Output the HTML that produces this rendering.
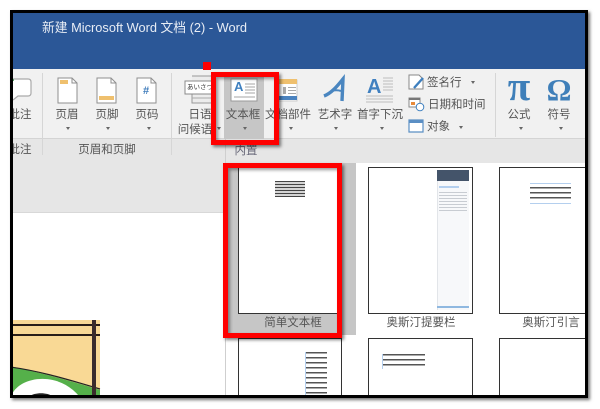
<!DOCTYPE html>
<html><head><meta charset="utf-8"><style>
html,body{margin:0;padding:0;background:#fff}
#p{position:relative;width:600px;height:409px;overflow:hidden;background:#fff;font-family:"Liberation Sans","Noto Sans CJK SC",sans-serif}
#f{position:absolute;left:10px;top:10px;width:578px;height:388px;box-sizing:border-box;border:3px solid #000;box-shadow:2px 2px 3px rgba(0,0,0,.55);overflow:hidden;background:#fff}
#s{position:absolute;left:-13px;top:-13px;width:600px;height:409px;filter:blur(.35px)}
.a{position:absolute}
.t{position:absolute;font-size:11.5px;line-height:14px;color:#555;white-space:nowrap;transform:translateX(-50%)}
.c{position:absolute;width:0;height:0;border-left:2.5px solid transparent;border-right:2.5px solid transparent;border-top:3px solid #666;transform:translateX(-50%)}
.v{position:absolute;width:1px;background:#d6d6d6}
.th{position:absolute;box-sizing:border-box;border:1px solid #333;background:#fff}
.r{position:absolute;box-sizing:border-box;border:5px solid #f00;box-shadow:2px 2px 3px rgba(0,0,0,.5),inset 2px 2px 3px rgba(0,0,0,.4)}
</style></head><body><div id="p"><div id="f"><div id="s">
<div class="a" style="left:0;top:0;width:600px;height:69px;background:#2b5797"></div>
<div class="a" style="left:42px;top:20px;color:#e8edf5;font-size:12.8px;line-height:16px;white-space:nowrap">新建 Microsoft Word 文档 (2) - Word</div>
<div class="a" style="left:0;top:69px;width:600px;height:70px;background:#f1f1f1"></div>
<div class="a" style="left:0;top:138px;width:600px;height:1px;background:#d4d4d4"></div>
<div class="a" style="left:0;top:139px;width:600px;height:73px;background:#e6e6e6"></div>
<div class="a" style="left:0;top:212px;width:225px;height:1px;background:#d8d8d8"></div>
<div class="v" style="left:42px;top:73px;height:82px"></div>
<div class="v" style="left:171px;top:73px;height:82px"></div>
<div class="v" style="left:495px;top:73px;height:64px"></div>

<svg class="a" style="left:0;top:69px" width="600" height="70" viewBox="0 69 600 70" fill="none">
<path d="M13 79H28Q31 79 31 82V93Q31 96 28 96H18L13 100" fill="#fff" stroke="#aaa" stroke-width="1.2"/>
<path d="M13 79H14V81H13Z" fill="#5ba86a"/>
<path d="M58 78H72L77 83V103H58Z" fill="#fff" stroke="#8f8f8f"/><path d="M72 78V83H77" stroke="#8f8f8f"/><path d="M60 80H68V84H60Z" fill="#efc06e"/>
<path d="M97 78H111L116 83V103H97Z" fill="#fff" stroke="#8f8f8f"/><path d="M111 78V83H116" stroke="#8f8f8f"/><path d="M99 96H114V100H99Z" fill="#efc06e"/>
<path d="M137 78H151L156 83V103H137Z" fill="#fff" stroke="#8f8f8f"/><path d="M151 78V83H156" stroke="#8f8f8f"/>
<path d="M192 76H212V103H192V92" fill="#ececec" stroke="#999"/>
<path d="M185 81H212V94H185Z" fill="#fff" stroke="#8a8a8a"/>
<path d="M192 98H212" stroke="#aaa"/>
<path d="M224 72H264V139H224Z" fill="#c6c6c6"/>
<path d="M231 79H257V101H231Z" fill="#fff" stroke="#999"/>
<path d="M245 84H255M245 87H255M245 90H255M245 93H255M234 97H255" stroke="#a5a5a5"/>
<path d="M279 80H297V101H279Z" fill="#fff" stroke="#ccc"/>
<path d="M279 79H297V84H279Z" fill="#efc06e"/><path d="M279 96H297V100H279Z" fill="#4b83bf"/>
<path d="M283 87H286V94H283ZM288 87H296V88H288ZM288 90H296V91H288ZM288 93H296V94H288Z" fill="#aaa"/>
<path d="M324 96C332 93 338 85 343 79L342 101" stroke="#4a86c0" stroke-width="3.4"/>
<path d="M331 91C335 90 338 90 341 91" stroke="#4a86c0" stroke-width="2"/>
<path d="M383 78H393M383 81H393M383 84H393M383 87H393M383 90H393M366 96H393M366 99H393M366 102H393" stroke="#bdbdbd"/>
<path d="M409 75H419L423 79V89H409Z" fill="#fff" stroke="#888"/>
<path d="M414 88L423 78" stroke="#3f80bf" stroke-width="2.4"/>
<path d="M409 98H420V107H409Z" fill="#fff" stroke="#888"/><path d="M409 98H420V100H409Z" fill="#777"/>
<path d="M411 102H415V105H411Z" fill="#e88a3a"/>
<circle cx="420" cy="107" r="3.8" fill="#fff" stroke="#3f80bf"/>
<path d="M409 120H423V132H409Z" fill="#fff" stroke="#5b8fc4" stroke-width="1.2"/><path d="M409 120H423V123H409Z" fill="#5b8fc4"/>
</svg>

<div class="a" style="left:203px;top:62px;width:8px;height:8px;background:#f00;z-index:6"></div>

<div class="a" style="left:187px;top:83px;font-size:6.5px;line-height:10px;color:#333;white-space:nowrap">あいさつ</div>
<div class="a" style="left:234px;top:80px;font-size:13px;font-weight:bold;line-height:13px;color:#3f80bf">A</div>
<div class="a" style="left:146px;top:85px;font-size:11px;font-weight:bold;line-height:13px;color:#3f7cbb;transform:translateX(-50%)">#</div>
<div class="a" style="left:367px;top:76px;font-size:20px;font-weight:bold;line-height:22px;color:#4080c0">A</div>
<div class="a" style="left:519px;top:68px;font-size:41px;font-family:'Liberation Serif',serif;font-weight:bold;line-height:36px;color:#3f7fb9;transform:translateX(-50%)">π</div>
<div class="a" style="left:559px;top:74px;font-size:31px;font-family:'Liberation Serif',serif;font-weight:bold;line-height:32px;color:#3f7fb9;transform:translateX(-50%)">Ω</div>

<div class="t" style="left:20px;top:108px">批注</div>
<div class="t" style="left:20px;top:143px">批注</div>
<div class="t" style="left:67px;top:108px">页眉</div><div class="c" style="left:68px;top:127px"></div>
<div class="t" style="left:107px;top:108px">页脚</div><div class="c" style="left:108px;top:127px"></div>
<div class="t" style="left:147px;top:108px">页码</div><div class="c" style="left:149px;top:127px"></div>
<div class="t" style="left:107px;top:143px">页眉和页脚</div>
<div class="t" style="left:200px;top:108px">日语</div>
<div class="t" style="left:195px;top:123px">问候语</div><div class="c" style="left:219px;top:127px"></div>
<div class="t" style="left:243px;top:108px">文本框</div><div class="c" style="left:245px;top:127px"></div>
<div class="t" style="left:288px;top:108px">文档部件</div><div class="c" style="left:291px;top:127px"></div>
<div class="t" style="left:335px;top:108px">艺术字</div><div class="c" style="left:336px;top:127px"></div>
<div class="t" style="left:380px;top:108px">首字下沉</div><div class="c" style="left:382px;top:127px"></div>
<div class="a" style="left:427px;top:76px;font-size:11.5px;line-height:14px;color:#555;white-space:nowrap">签名行</div><div class="c" style="left:473px;top:81px"></div>
<div class="a" style="left:428px;top:98px;font-size:11.5px;line-height:14px;color:#555;white-space:nowrap">日期和时间</div>
<div class="a" style="left:427px;top:120px;font-size:11.5px;line-height:14px;color:#555;white-space:nowrap">对象</div><div class="c" style="left:461px;top:126px"></div>
<div class="t" style="left:519px;top:108px">公式</div><div class="c" style="left:521px;top:127px"></div>
<div class="t" style="left:559px;top:108px">符号</div><div class="c" style="left:561px;top:127px"></div>

<div class="a" style="left:225px;top:139px;width:375px;height:24px;background:#e6e6e6;border-left:1px solid #cfcfcf"></div>
<div class="t" style="left:246px;top:144px;color:#667">内置</div>
<div class="a" style="left:225px;top:163px;width:375px;height:246px;background:#fff;border-left:1px solid #cfcfcf"></div>
<div class="a" style="left:226px;top:163px;width:130px;height:172px;background:#c6c6c6"></div>

<div class="th" style="left:238px;top:167px;width:101px;height:147px"></div>
<div class="a" style="left:275px;top:181px;width:30px;height:16px;background:repeating-linear-gradient(#444 0 1px,#d4d4d4 1px 3px)"></div>
<div class="th" style="left:368px;top:167px;width:105px;height:147px"></div>
<div class="a" style="left:437px;top:170px;width:32px;height:140px;background:#f7f8fa;border-left:1px solid #e2e5e9;box-sizing:border-box"></div>
<div class="a" style="left:437px;top:170px;width:32px;height:11px;background:#44546a"></div>
<div class="a" style="left:439px;top:186px;width:20px;height:2px;background:#b4cfee"></div>
<div class="a" style="left:439px;top:192px;width:28px;height:21px;background:repeating-linear-gradient(#c8ccd2 0 1px,#f7f8fa 1px 3px)"></div>
<div class="a" style="left:437px;top:306px;width:32px;height:2px;background:#8fb8e0"></div>
<div class="th" style="left:499px;top:167px;width:110px;height:147px"></div>
<div class="a" style="left:530px;top:183px;width:41px;height:1px;background:#b4cfee"></div>
<div class="a" style="left:530px;top:187px;width:41px;height:13px;background:repeating-linear-gradient(#555 0 1.5px,#fff 1.5px 5px)"></div>
<div class="a" style="left:530px;top:203px;width:41px;height:1px;background:#b4cfee"></div>
<div class="t" style="left:293px;top:316px;color:#555">简单文本框</div>
<div class="t" style="left:421px;top:316px">奥斯汀提要栏</div>
<div class="t" style="left:551px;top:316px">奥斯汀引言</div>

<div class="th" style="left:238px;top:338px;width:104px;height:80px"></div>
<div class="a" style="left:305px;top:352px;width:21px;height:44px;background:repeating-linear-gradient(#555 0 1.5px,#fff 1.5px 5px);border-left:1px solid #b4cfee"></div>
<div class="th" style="left:368px;top:338px;width:105px;height:80px"></div>
<div class="a" style="left:382px;top:354px;width:42px;height:15px;background:repeating-linear-gradient(#555 0 1.5px,#fff 1.5px 5px);border-left:1px solid #b4cfee"></div>
<div class="th" style="left:499px;top:338px;width:110px;height:80px"></div>

<svg class="a" style="left:0;top:320px" width="101" height="80" viewBox="0 320 101 80">
<rect x="0" y="320" width="100" height="80" fill="#f9d995"/>
<path d="M0 364C30 370 75 382 100 390V400H0Z" fill="#55b04a"/>
<path d="M10 400C14 376 60 368 82 400Z" fill="#fff"/>
<path d="M26 400C30 391 52 391 56 400Z" fill="#222"/>
<path d="M0 366C30 368 70 380 100 389" stroke="#222" stroke-width="1.2" fill="none"/>
<path d="M0 325H100M0 335H100" stroke="#2a1f18" stroke-width="2"/>
<path d="M94 320V400" stroke="#3a2c2c" stroke-width="4"/>
</svg>

<div class="r" style="left:211px;top:72px;width:68px;height:73px;z-index:5"></div>
<div class="r" style="left:223px;top:163px;width:119px;height:175px;z-index:5"></div>
</div></div></div></body></html>
